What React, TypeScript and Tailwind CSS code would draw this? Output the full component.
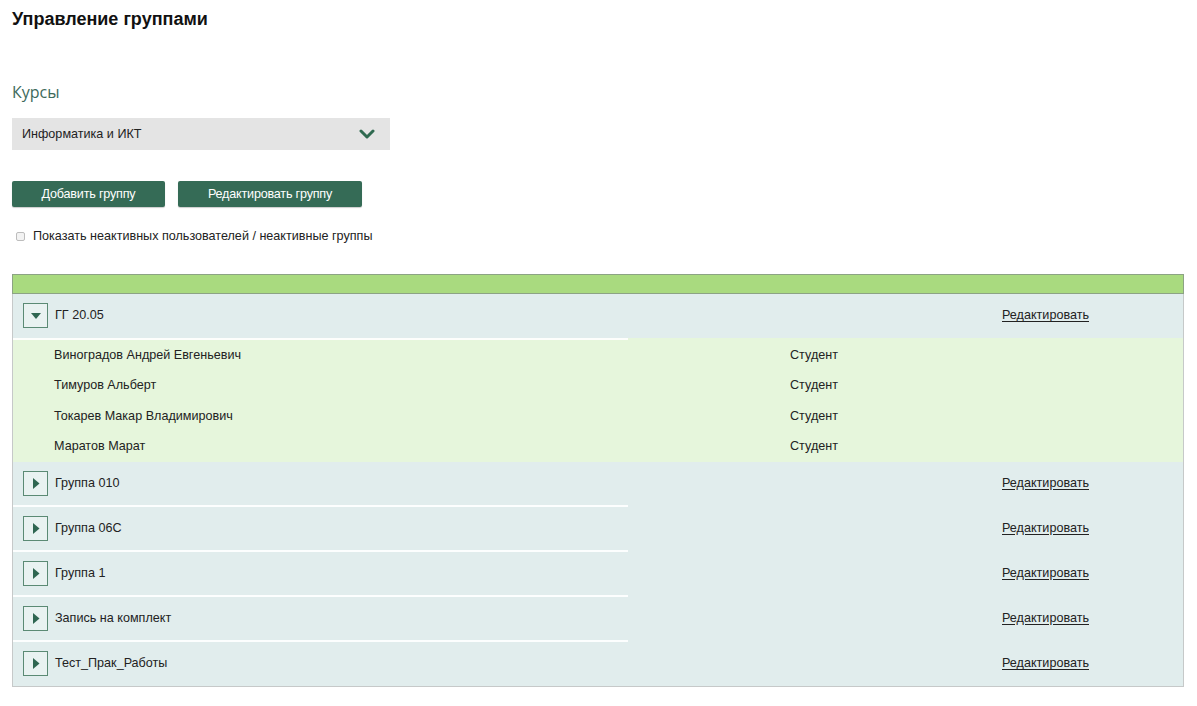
import React from "react";

const groups = ["Группа 010", "Группа 06С", "Группа 1", "Запись на комплект", "Тест_Прак_Работы"];
const members = [
  "Виноградов Андрей Евгеньевич",
  "Тимуров Альберт",
  "Токарев Макар Владимирович",
  "Маратов Марат",
];

function Toggle({ open }: { open: boolean }) {
  return (
    <div className="w-[25px] h-[25px] border border-[#5b8a74] bg-[#e9f2f1] flex items-center justify-center shrink-0">
      {open ? (
        <svg width="12" height="8" viewBox="0 0 12 8">
          <polygon points="1,1 11,1 6,7" fill="#2f6651" />
        </svg>
      ) : (
        <svg width="8" height="13" viewBox="0 0 8 13">
          <polygon points="1,1 7.5,6.5 1,12" fill="#2f6651" />
        </svg>
      )}
    </div>
  );
}

function Sep() {
  return <div className="h-[2px] w-[615px] bg-white opacity-90" />;
}

function GroupRow({ name, open, h }: { name: string; open?: boolean; h: string }) {
  return (
    <div className={`${h} flex items-center pl-[10px] relative`}>
      <Toggle open={!!open} />
      <span className="ml-[7px] text-[12.6px] text-[#222]">{name}</span>
      <span className="absolute left-[989px] text-[12.6px] text-[#222] underline underline-offset-2">Редактировать</span>
    </div>
  );
}

export default function App() {
  return (
    <div className="w-[1197px] h-[706px] bg-white font-['Liberation_Sans',Arial,sans-serif] text-[#222]">
      <div className="pl-[12px] pt-[9px]">
        <h1 className="text-[18px] font-bold text-[#111] leading-[20px]">Управление группами</h1>
        <div className="mt-[52px] text-[16px] text-[#3d6a5b] font-['Open_Sans',sans-serif] leading-[22px]">Курсы</div>
        <div className="mt-[15px] w-[378px] h-[32px] bg-[#e4e4e4] flex items-center justify-between pl-[10px] pr-[15px]">
          <span className="text-[12.6px] text-[#222]">Информатика и ИКТ</span>
          <svg width="16" height="10" viewBox="0 0 16 10">
            <polyline points="2,2 8,8 14,2" fill="none" stroke="#2f6a50" strokeWidth="3" strokeLinecap="round" strokeLinejoin="round" />
          </svg>
        </div>
        <div className="mt-[31px] flex gap-[13px]">
          <button className="w-[153px] h-[26px] bg-[#356b56] rounded-[2px] text-white text-[12.6px] tracking-[-0.2px] shadow-[0_1px_1px_rgba(0,0,0,0.2)]">Добавить группу</button>
          <button className="w-[184px] h-[26px] bg-[#356b56] rounded-[2px] text-white text-[12.6px] tracking-[-0.2px] shadow-[0_1px_1px_rgba(0,0,0,0.2)]">Редактировать группу</button>
        </div>
        <div className="mt-[20px] flex items-center pl-[4px]">
          <div className="w-[9px] h-[9px] rounded-[2px] border border-[#bdbdbd] bg-[#f3f3f3]" />
          <span className="ml-[8px] text-[12.6px] text-[#222]">Показать неактивных пользователей / неактивные группы</span>
        </div>
      </div>
      <div className="ml-[12px] mt-[28px] w-[1172px] border-x border-b border-[#c6c9c9] bg-[#e1eded]">
        <div className="h-[20px] bg-[#a9da7f] border border-[#8ca384] -mx-[1px]" />
        <GroupRow name="ГГ 20.05" open h="h-[44px]" />
        <Sep />
        <div className="bg-[#e6f6dc] -mt-[2px] pt-[2px]">
          {members.map((m) => (
            <div key={m} className="h-[30.5px] flex items-center relative text-[12.6px]">
              <span className="pl-[41px]">{m}</span>
              <span className="absolute left-[777px]">Студент</span>
            </div>
          ))}
        </div>
        {groups.map((g, i) => (
          <div key={g}>
            <GroupRow name={g} h={i < groups.length - 1 ? "h-[43px]" : "h-[44px]"} />
            {i < groups.length - 1 && <Sep />}
          </div>
        ))}
      </div>
    </div>
  );
}
